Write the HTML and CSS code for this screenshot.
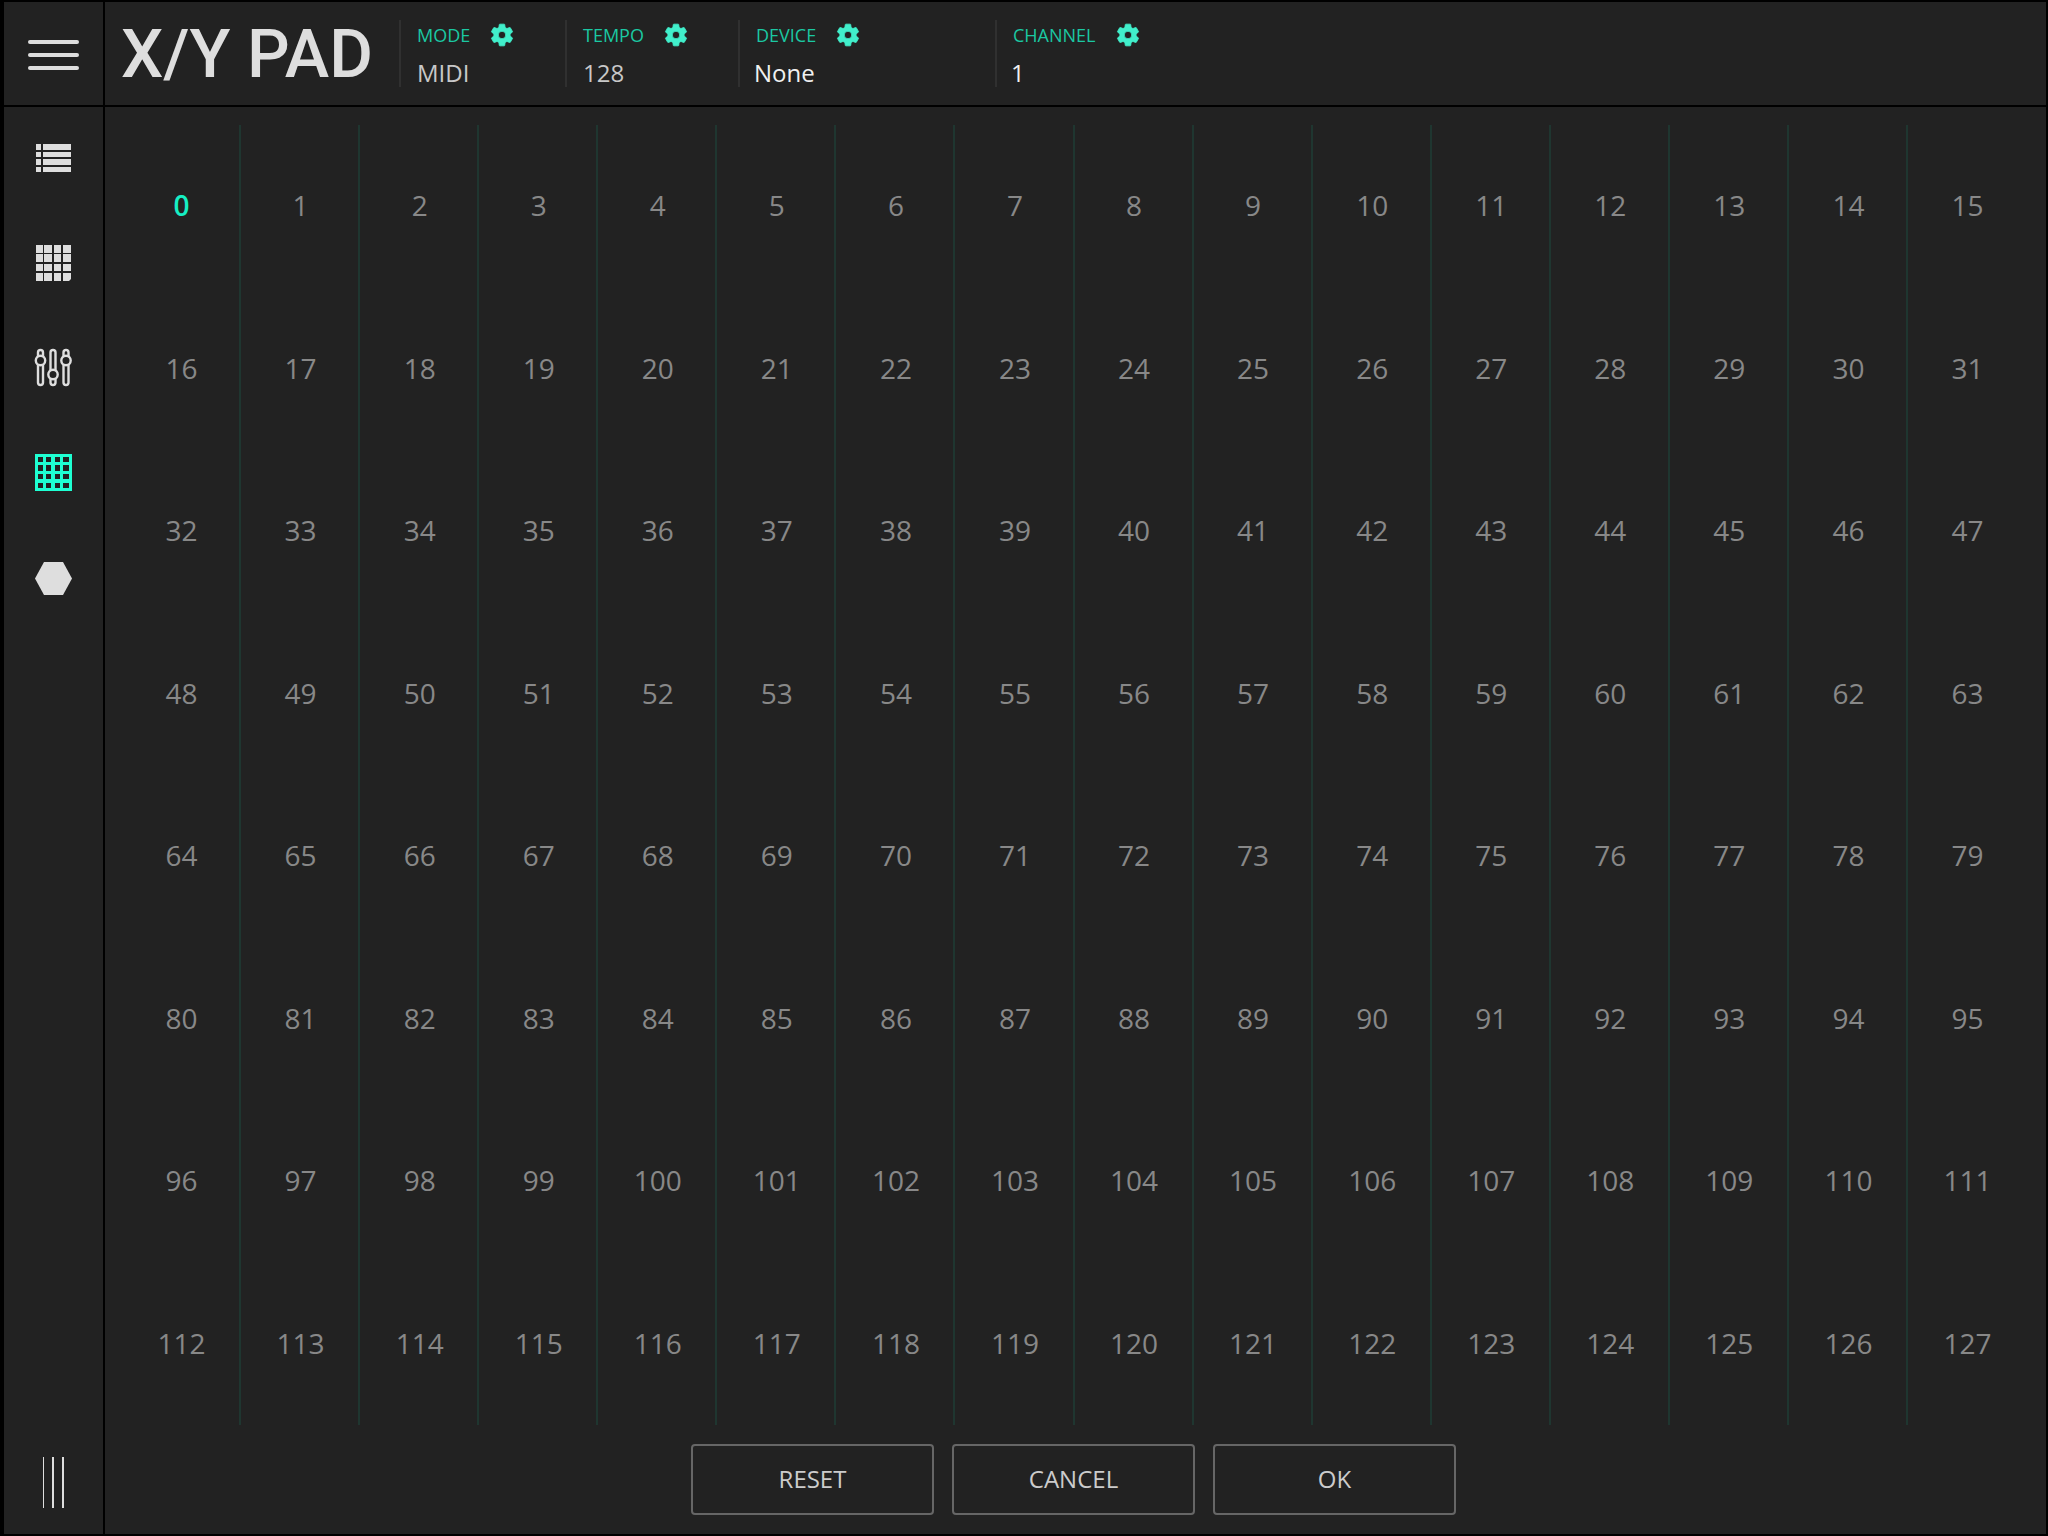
FILE: index.html
```html
<!DOCTYPE html>
<html lang="en">
<head>
<meta charset="utf-8">
<meta name="viewport" content="width=device-width, initial-scale=1">
<title>X/Y Pad</title>
<link rel="stylesheet" href="styles.css">
</head>
<body>
<svg class="defs" aria-hidden="true">
  <symbol id="gear" viewBox="0 0 24 24">
    <path d="M12 15.5A3.5 3.5 0 0 1 8.500 12 3.500 3.500 0 0 1 12 8.500a3.500 3.500 0 0 1 3.500 3.500 3.500 3.500 0 0 1-3.500 3.500m7.430-2.530c.04-.32.07-.64.07-.97s-.03-.66-.07-1l2.110-1.630c.19-.15.24-.42.12-.64l-2-3.460c-.12-.22-.39-.31-.61-.22l-2.490 1c-.52-.39-1.060-.73-1.690-.98l-.37-2.650A.506.506 0 0 0 14 2h-4c-.25 0-.46.18-.5.420l-.37 2.650c-.63.25-1.170.59-1.690.98l-2.490-1c-.22-.09-.49 0-.61.22l-2 3.460c-.13.22-.07.49.12.64L4.570 11c-.04.34-.07.67-.07 1s.03.65.07.97l-2.110 1.660c-.19.15-.25.42-.12.64l2 3.460c.12.22.39.3.61.22l2.490-1.010c.52.4 1.060.74 1.690.99l.37 2.650c.04.24.25.42.5.42h4c.25 0 .46-.18.5-.42l.37-2.650c.63-.26 1.170-.59 1.690-.99l2.490 1.010c.22.08.49 0 .61-.22l2-3.460c.12-.22.07-.49-.12-.64z"/>
  </symbol>
</svg>
<div class="app">
  <div class="menu-cell">
    <button class="menu-button" type="button" aria-label="Menu">
      <span class="menu-bar"></span><span class="menu-bar"></span><span class="menu-bar"></span>
    </button>
  </div>

  <header class="header">
    <h1 class="title">X/Y PAD</h1>
    <section class="setting setting-mode">
      <div class="setting-head"><span>MODE</span><button class="gear" type="button" aria-label="Mode settings"><svg><use href="#gear"/></svg></button></div>
      <div class="setting-value">MIDI</div>
    </section>
    <section class="setting setting-tempo">
      <div class="setting-head"><span>TEMPO</span><button class="gear" type="button" aria-label="Tempo settings"><svg><use href="#gear"/></svg></button></div>
      <div class="setting-value">128</div>
    </section>
    <section class="setting setting-device">
      <div class="setting-head"><span>DEVICE</span><button class="gear" type="button" aria-label="Device settings"><svg><use href="#gear"/></svg></button></div>
      <div class="setting-value editable">None</div>
    </section>
    <section class="setting setting-channel">
      <div class="setting-head"><span>CHANNEL</span><button class="gear" type="button" aria-label="Channel settings"><svg><use href="#gear"/></svg></button></div>
      <div class="setting-value editable">1</div>
    </section>
  </header>

  <nav class="sidebar" aria-label="Views">
    <button class="nav-button" type="button" aria-label="List">
      <svg width="37" height="37" viewBox="0 0 37 37"><path d="M1 4h5v6H1zM8 4h28v6H8zM1 12h5v5H1zM8 12h28v5H8zM1 19h5v6H1zM8 19h28v6H8zM1 27h5v5H1zM8 27h28v5H8z"/></svg>
    </button>
    <button class="nav-button" type="button" aria-label="Pads">
      <svg width="37" height="37" viewBox="0 0 37 37"><path d="M1 0h7v8H1zM9 0h8v8H9zM19 0h7v8h-7zM28 0h8v8h-8zM1 9h7v8H1zM9 9h8v8H9zM19 9h7v8h-7zM28 9h8v8h-8zM1 19h7v7H1zM9 19h8v7H9zM19 19h7v7h-7zM28 19h8v7h-8zM1 28h7v8H1zM9 28h8v8H9zM19 28h7v8h-7zM28 28h8v6l-2 2h-6z"/></svg>
    </button>
    <button class="nav-button" type="button" aria-label="Mixer">
      <svg class="outline" width="37" height="37" viewBox="0 1 37 37"><path d="M3 7V3.500a2.500 2.500 0 0 1 5 0V7M3 16v17.500a2.500 2.500 0 0 0 5 0V16M15.500 21V3.500a2.500 2.500 0 0 1 5 0V21M15.500 30v3.500a2.500 2.500 0 0 0 5 0V30M28.500 7V3.500a2.500 2.500 0 0 1 5 0V7M28.500 16v17.500a2.500 2.500 0 0 0 5 0V16"/><circle cx="5.500" cy="11.500" r="4.700"/><circle cx="18" cy="25.500" r="4.700"/><circle cx="31" cy="11.500" r="4.700"/></svg>
    </button>
    <button class="nav-button active" type="button" aria-label="X/Y pad">
      <svg class="outline-grid" width="37" height="37" viewBox="0 1 37 37"><path fill-rule="evenodd" d="M0 0h37v37H0zM3 3v5h5V3zM11 3v5h5V3zM20 3v5h5V3zM28 3v5h6V3zM3 11v6h5v-6zM11 11v6h5v-6zM20 11v6h5v-6zM28 11v6h6v-6zM3 20v5h5v-5zM11 20v5h5v-5zM20 20v5h5v-5zM28 20v5h6v-5zM3 29v5h5v-5zM11 29v5h5v-5zM20 29v5h5v-5zM28 29v5h6v-5z"/></svg>
    </button>
    <button class="nav-button" type="button" aria-label="Hexagon">
      <svg width="37" height="37" viewBox="0 0 37 37"><path d="M9 2h19l9 16.500L28 35H9L0 18.500z"/></svg>
    </button>
    <button class="nav-button nav-last" type="button" aria-label="Keyboard">
      <svg width="21" height="51" viewBox="0 0 21 51"><path d="M0 0h1v51H0zM9 0h2v51H9zM19 0h2v51h-2z"/></svg>
    </button>
  </nav>

  <main class="main">
    <div class="numbers">
      <button class="selected">0</button><button>1</button><button>2</button><button>3</button><button>4</button><button>5</button><button>6</button><button>7</button><button>8</button><button>9</button><button>10</button><button>11</button><button>12</button><button>13</button><button>14</button><button>15</button>
      <button>16</button><button>17</button><button>18</button><button>19</button><button>20</button><button>21</button><button>22</button><button>23</button><button>24</button><button>25</button><button>26</button><button>27</button><button>28</button><button>29</button><button>30</button><button>31</button>
      <button>32</button><button>33</button><button>34</button><button>35</button><button>36</button><button>37</button><button>38</button><button>39</button><button>40</button><button>41</button><button>42</button><button>43</button><button>44</button><button>45</button><button>46</button><button>47</button>
      <button>48</button><button>49</button><button>50</button><button>51</button><button>52</button><button>53</button><button>54</button><button>55</button><button>56</button><button>57</button><button>58</button><button>59</button><button>60</button><button>61</button><button>62</button><button>63</button>
      <button>64</button><button>65</button><button>66</button><button>67</button><button>68</button><button>69</button><button>70</button><button>71</button><button>72</button><button>73</button><button>74</button><button>75</button><button>76</button><button>77</button><button>78</button><button>79</button>
      <button>80</button><button>81</button><button>82</button><button>83</button><button>84</button><button>85</button><button>86</button><button>87</button><button>88</button><button>89</button><button>90</button><button>91</button><button>92</button><button>93</button><button>94</button><button>95</button>
      <button>96</button><button>97</button><button>98</button><button>99</button><button>100</button><button>101</button><button>102</button><button>103</button><button>104</button><button>105</button><button>106</button><button>107</button><button>108</button><button>109</button><button>110</button><button>111</button>
      <button>112</button><button>113</button><button>114</button><button>115</button><button>116</button><button>117</button><button>118</button><button>119</button><button>120</button><button>121</button><button>122</button><button>123</button><button>124</button><button>125</button><button>126</button><button>127</button>
    </div>
    <div class="actions">
      <button class="action" type="button">RESET</button>
      <button class="action" type="button">CANCEL</button>
      <button class="action" type="button">OK</button>
    </div>
  </main>
</div>
</body>
</html>
```
FILE: styles.css
```css
*, *::before, *::after { box-sizing: border-box; }

body {
  margin: 0;
  background: #000;
  color: #dedede;
  font-family: "Open Sans", "Noto Sans", sans-serif;
}

button {
  margin: 0;
  padding: 0;
  border: 0;
  background: none;
  color: inherit;
  font: inherit;
  cursor: pointer;
}

.defs { display: none; }

.app {
  display: grid;
  grid-template-columns: 99px 1fr;
  grid-template-rows: 103px 1fr;
  gap: 2px;
  min-height: 100vh;
  padding: 2px 2px 2px 4px;
}

.menu-cell, .header, .sidebar, .main { background: #222; }

.menu-cell {
  display: flex;
  align-items: center;
  justify-content: center;
  padding-top: 3px;
}

.menu-button {
  display: flex;
  flex-direction: column;
  gap: 9px;
  width: 51px;
}

.menu-bar {
  height: 4px;
  border-radius: 2px;
  background: #dedede;
}

.header {
  display: flex;
  align-items: center;
  padding-left: 16px;
}

.title {
  width: 278px;
  margin: 0;
  font: 500 67px/80px Roboto, sans-serif;
  white-space: nowrap;
}

.setting {
  height: 67px;
  padding-left: 16px;
  border-left: 2px solid #303030;
}

.setting-mode { width: 166px; }
.setting-tempo { width: 173px; }
.setting-device { width: 257px; }

.setting-head {
  display: flex;
  align-items: center;
  gap: 19px;
  height: 30px;
  color: #1bc8a2;
  font-size: 18px;
  line-height: 30px;
}

.gear {
  width: 26px;
  height: 26px;
}

.gear svg {
  display: block;
  width: 26px;
  height: 26px;
  fill: #41efcb;
  stroke: #41efcb;
  stroke-width: 0.800;
}

.setting-value {
  margin-top: 6px;
  color: #c8c8c8;
  font-size: 24px;
  line-height: 34px;
}

.editable {
  margin-left: -2px;
  color: #f0f0f0;
}

.sidebar {
  display: flex;
  flex-direction: column;
  gap: 2px;
}

.nav-button {
  display: flex;
  align-items: center;
  justify-content: center;
  height: 103px;
}

.nav-button svg {
  overflow: visible;
  fill: #dedede;
}

.nav-button.active svg { fill: #1effd2; }

.nav-button .outline {
  fill: none;
  stroke: #dedede;
  stroke-width: 2.400;
}

.nav-last { margin-top: auto; }

.main {
  display: flex;
  flex-direction: column;
  gap: 19px;
  padding: 18px 19px 19px 17px;
}

.numbers {
  flex: 1;
  display: grid;
  grid-template-columns: repeat(16, 1fr);
  grid-auto-rows: 1fr;
  color: #888;
  font-size: 28px;
}

.numbers button {
  padding: 0 0 2px 2px;
  border-right: 2px solid #1f3630;
}

.numbers button:nth-child(16n) { border-right-color: transparent; }

.numbers .selected {
  color: #16efc4;
  font-weight: 600;
}

.actions {
  display: flex;
  justify-content: center;
  gap: 18px;
  padding-right: 2px;
}

.action {
  width: 243px;
  height: 71px;
  padding-bottom: 2px;
  border: 2px solid #666;
  border-radius: 4px;
  color: #ccc;
  font-size: 24px;
}
```
